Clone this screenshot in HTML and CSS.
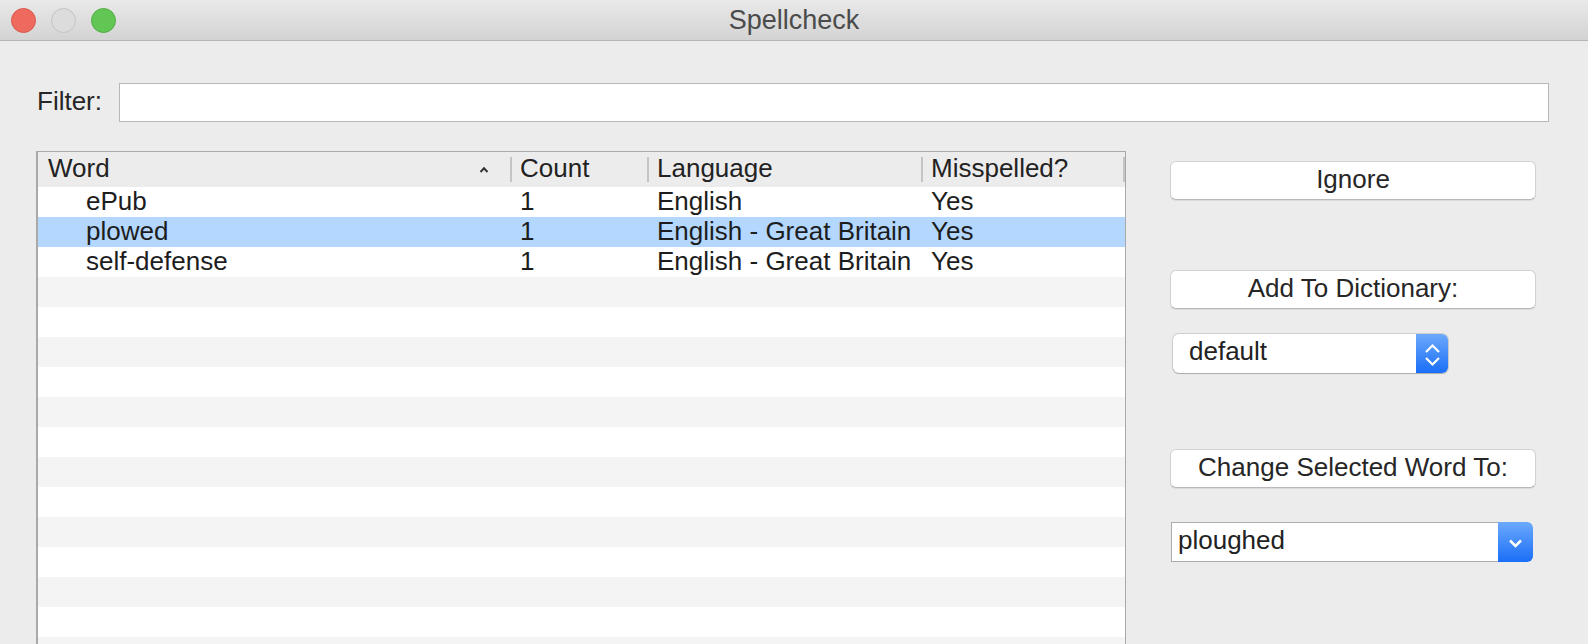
FILE: index.html
```html
<!DOCTYPE html>
<html lang="en">
<head>
    <meta charset="UTF-8">
    <title>Spellcheck</title>
    <link rel="stylesheet" href="styles.css">
</head>
<body>
<div class="window">
    <div class="titlebar">
        <div class="lights">
            <span class="light close"></span>
            <span class="light mini"></span>
            <span class="light zoom"></span>
        </div>
        <div class="title">Spellcheck</div>
        <div></div>
    </div>

    <div class="filter">
        <label for="filter">Filter:</label>
        <input type="text" id="filter" class="filter_input">
    </div>

    <div class="main">
        <div class="table">
            <div class="thead">
                <div class="th th_word">
                    <span>Word</span>
                    <svg class="sort" width="10" height="7" viewBox="0 0 10 7"><path d="M1.5 6 L5 2.2 L8.5 6" fill="none" stroke="#333" stroke-width="2"/></svg>
                </div>
                <div class="th">Count</div>
                <div class="th">Language</div>
                <div class="th th_last">Misspelled?</div>
            </div>
            <div class="tbody">
                <div class="row"><div class="td td_word">ePub</div><div class="td">1</div><div class="td">English</div><div class="td">Yes</div></div>
                <div class="row selected"><div class="td td_word">plowed</div><div class="td">1</div><div class="td">English - Great Britain</div><div class="td">Yes</div></div>
                <div class="row"><div class="td td_word">self-defense</div><div class="td">1</div><div class="td">English - Great Britain</div><div class="td">Yes</div></div>
                <div class="row"></div>
                <div class="row"></div>
                <div class="row"></div>
                <div class="row"></div>
                <div class="row"></div>
                <div class="row"></div>
                <div class="row"></div>
                <div class="row"></div>
                <div class="row"></div>
                <div class="row"></div>
                <div class="row"></div>
                <div class="row"></div>
                <div class="row"></div>
            </div>
        </div>

        <div class="side">
            <div class="btn btn_ignore">Ignore</div>
            <div class="btn btn_add">Add To Dictionary:</div>
            <div class="popup">
                <div class="popup_text">default</div>
                <div class="popup_arrows">
                    <svg width="32" height="39" viewBox="0 0 32 39"><path d="M10 18 L16.5 11.5 L23 18" fill="none" stroke="#fff" stroke-width="2.2"/><path d="M10 24 L16.5 30.5 L23 24" fill="none" stroke="#fff" stroke-width="2.2"/></svg>
                </div>
            </div>
            <div class="btn btn_change">Change Selected Word To:</div>
            <div class="combo">
                <div class="combo_text">ploughed</div>
                <div class="combo_btn">
                    <svg width="35" height="40" viewBox="0 0 35 40"><path d="M12 18.5 L17.5 24 L23 18.5" fill="none" stroke="#fff" stroke-width="2.5"/></svg>
                </div>
            </div>
        </div>
    </div>
</div>
</body>
</html>
```

FILE: styles.css
```css
*{box-sizing:border-box;}
html,body{margin:0;padding:0;}
body{background:#ececec;font-family:"Liberation Sans",Arial,sans-serif;font-size:26px;color:#222;}
.window{height:644px;overflow:hidden;}

/* title bar */
.titlebar{height:41px;display:grid;grid-template-columns:1fr auto 1fr;align-items:center;background:linear-gradient(#e9e9e9,#d3d3d3);border-bottom:1px solid #b5b5b5;}
.lights{display:flex;gap:15px;padding-left:11px;}
.light{width:25px;height:25px;border-radius:50%;}
.close{background:#ee6a5f;border:1px solid #d9564b;}
.mini{background:#dcdcdc;border:1px solid #c3c3c3;}
.zoom{background:#62c655;border:1px solid #50ad42;}
.title{font-size:27px;color:#4b4b4b;}

/* filter */
.filter{display:flex;align-items:center;gap:17px;margin:42px 39px 0 37px;}
.filter label{color:#262626;margin-top:-2px;}
.filter_input{flex:1;height:39px;border:1px solid #b8b8b8;background:#fff;outline:none;font:inherit;margin:0;}

/* table */
.main{display:flex;align-items:flex-start;margin:29px 0 0 36px;}
.table{width:1090px;height:520px;border:1px solid #a9a9a9;border-left-width:2px;background:#fff;overflow:hidden;flex-shrink:0;}
.thead,.row{display:grid;grid-template-columns:472px 137px 274px 1fr;}
.thead{height:35px;background:#ececec;align-items:start;color:#222;}
.th{padding-left:10px;height:35px;line-height:32px;background:linear-gradient(#c4c4c4,#c4c4c4) left center/2px 25px no-repeat;}
.th_word{background:none;display:flex;justify-content:space-between;align-items:center;padding-right:21px;line-height:32px;padding-bottom:3px;}
.sort{margin-top:2px;}
.th_last{background:linear-gradient(#c4c4c4,#c4c4c4) left center/2px 25px no-repeat,linear-gradient(#c4c4c4,#c4c4c4) right center/2px 25px no-repeat;}
.row{height:30px;line-height:28px;color:#1d1d1d;}
.row:nth-child(even){background:#f4f4f4;}
.row.selected{background:#b3d7ff;}
.td{padding-left:10px;white-space:nowrap;}
.td_word{padding-left:48px;}

/* right side */
.side{width:366px;margin-left:44px;padding-top:10px;display:flex;flex-direction:column;align-items:flex-start;}
.btn{width:366px;height:39px;line-height:35px;text-align:center;color:#262626;background:#fff;border:1px solid #d2d2d2;border-bottom-color:#b8b8b8;border-radius:6px;box-shadow:0 1px 1px rgba(0,0,0,.08);}
.btn_add{margin-top:70px;}
.btn_change{margin-top:76px;}

.popup{width:275px;height:39px;margin:25px 0 0 3px;display:flex;background:#fff;border-radius:6px;box-shadow:0 0 0 1px rgba(0,0,0,.12),0 1px 1px rgba(0,0,0,.18);overflow:hidden;}
.popup_text{flex:1;padding-left:16px;line-height:35px;color:#222;}
.popup_arrows{width:32px;background:linear-gradient(#6ca9fc,#1a6ef7);}
.popup_arrows svg{display:block;}

.combo{width:362px;height:40px;margin:34px 0 0 1px;display:flex;}
.combo_text{flex:1;border:1px solid #ababab;border-right:none;background:#fff;padding-left:6px;line-height:34px;color:#222;}
.combo_btn{width:35px;background:linear-gradient(#6ca9fc,#1a6ef7);border-radius:0 6px 6px 0;}
.combo_btn svg{display:block;}
```
